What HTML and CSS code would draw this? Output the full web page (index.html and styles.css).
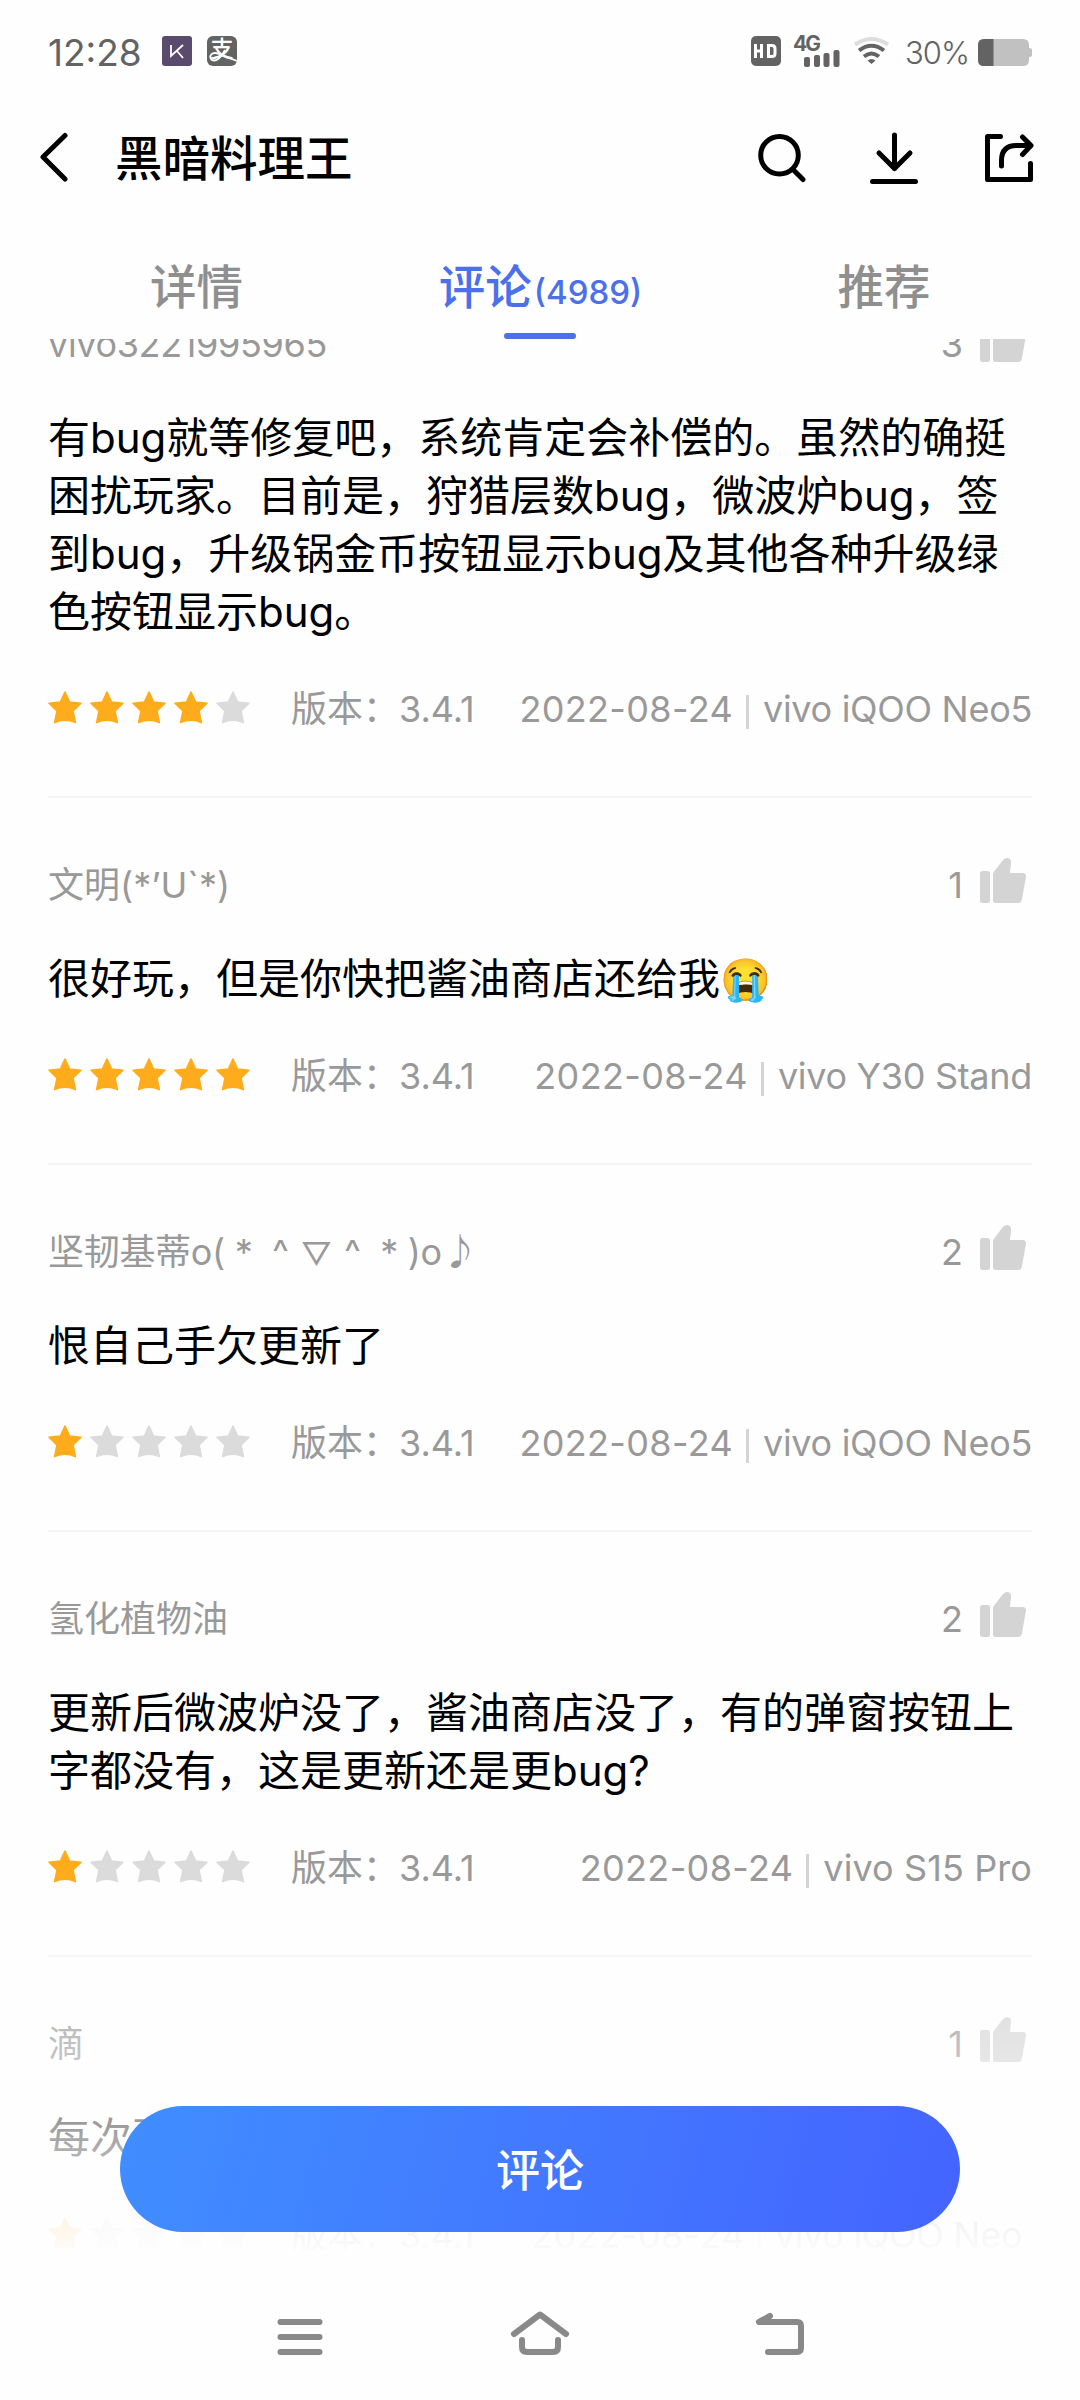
FILE: index.html
```html
<!DOCTYPE html>
<html lang="zh-CN">
<head>
<meta charset="utf-8">
<title>黑暗料理王</title>
<link rel="stylesheet" href="styles.css">
</head>
<body>
<svg class="defs" width="0" height="0" aria-hidden="true">
  <symbol id="star" viewBox="0 0 34 33"><path d="M17 1 L21.6 11 L33 12.2 L25 20 L27.4 31.6 Q17 26.6 6.6 31.6 L9 20 L1 12.2 L12.4 11 Z" fill="currentColor" stroke="currentColor" stroke-width="1.6" stroke-linejoin="round"/></symbol>
  <symbol id="thumb" viewBox="0 0 46 45"><rect x="0" y="13" width="10" height="32" rx="2.5" fill="currentColor"/><path d="M13 16.500 Q13 14.500 14.500 13 L23 2 Q25 0 27.500 0 Q31.500 .5 31 5 L30 15 H43 Q46.400 15.200 46 18.500 L41.800 42 Q41 45 38 45 H15.500 Q13 45 13 42.500 Z" fill="currentColor"/></symbol>
</svg>
<div class="screen">
  <header class="status">
    <span class="time">12:28</span>
    <svg class="app-k" width="30" height="30" viewBox="0 0 30 30"><rect width="30" height="30" rx="3" fill="#5a4a6e"/><path d="M9 9V20L21 9M15 15L21 22" fill="none" stroke="#fff" stroke-width="1.8"/></svg>
    <span class="pay">支<svg width="30" height="30" viewBox="0 0 30 30"><path d="M18 14C14 22 9 26 5 24C1 20 5 15 12 18L30 25" fill="none" stroke="#fff" stroke-width="1.800"/></svg></span>
    <span class="spacer"></span>
    <svg class="hd" width="30" height="30" viewBox="0 0 30 30"><rect width="30" height="30" rx="5" fill="#636363"/><path d="M4.500 8V22M10.500 8V22M4.500 15H10.500M17.500 9.500H21Q24 9.500 24 12.500V17.500Q24 20.500 21 20.500H17.500Z" fill="none" stroke="#fff" stroke-width="3"/></svg>
    <span class="signal"><b>4G</b><svg width="36" height="17" viewBox="0 0 36 17" fill="#636363"><rect y="7" width="6" height="10" rx="2"/><rect x="10" y="5" width="6" height="12" rx="2"/><rect x="19.500" y="3" width="6" height="14" rx="2"/><rect x="29.500" width="6" height="17" rx="2"/></svg></span>
    <svg class="wifi" width="35" height="28" viewBox="0 0 35 28" fill="none" stroke="#636363" stroke-width="4"><path d="M1 7.500Q17.500-3.500 34 7.500" stroke="#ddd"/><path d="M5 13.500Q17.500 4 30 13.500M10 19.500Q17.500 13.500 25 19.500"/><path d="M13.500 23.500Q17.500 20.500 21.500 23.500L17.500 27Z" fill="#636363" stroke="none"/></svg>
    <span class="percent">30%</span>
    <svg class="battery" width="54" height="27" viewBox="0 0 54 27"><path d="M6 0H45Q51 0 51 6V9Q54 9 54 11V16Q54 18 51 18V21Q51 27 45 27H6Q0 27 0 21V6Q0 0 6 0Z" fill="#c1c1c1"/><path d="M6 0H15.500V27H6Q0 27 0 21V6Q0 0 6 0Z" fill="#636363"/></svg>
  </header>
  <div class="titlebar">
    <svg class="back" width="28" height="50" viewBox="0 0 28 50"><path d="M25 3.500L3 25L25 47" fill="none" stroke="#000" stroke-width="5" stroke-linecap="round" stroke-linejoin="round"/></svg>
    <h1>黑暗料理王</h1>
    <span class="spacer"></span>
    <svg class="search" width="48" height="52" viewBox="0 0 48 52" fill="none" stroke="#000" stroke-width="5" stroke-linecap="round"><circle cx="21.500" cy="23.200" r="18.800"/><path d="M36 38.500L45 47.500"/></svg>
    <svg class="download" width="48" height="52" viewBox="0 0 48 52" fill="none" stroke="#000" stroke-width="5" stroke-linecap="round" stroke-linejoin="round"><path d="M24.500 3V36.500M9 21L24.500 36.500L40 21M2.500 49.500H45.500"/></svg>
    <svg class="share" width="50" height="52" viewBox="0 0 50 52" fill="none" stroke="#000" stroke-width="5" stroke-linecap="round" stroke-linejoin="round"><path d="M15.500 4.500H2.500V47.500H45.500V31.500M16.500 34V28.500Q16.500 13.500 31.500 13.500H46M37.500 5L46 13.500L37.500 22.500"/></svg>
  </div>
  <nav class="tabs">
    <span class="tab">详情</span>
    <span class="tab active">评论<small>(4989)</small></span>
    <span class="tab">推荐</span>
  </nav>
  <main class="list">
    <article class="review first">
      <div class="top"><span class="name digits">vivo3221995965</span><span class="count">3</span><svg class="thumb"><use href="#thumb"/></svg></div>
      <p class="body">有bug就等修复吧，系统肯定会补偿的。虽然的确挺<br>困扰玩家。目前是，狩猎层数bug，微波炉bug，签<br>到bug，升级锅金币按钮显示bug及其他各种升级绿<br>色按钮显示bug。</p>
      <div class="meta"><span class="stars"><svg class="on"><use href="#star"/></svg><svg class="on"><use href="#star"/></svg><svg class="on"><use href="#star"/></svg><svg class="on"><use href="#star"/></svg><svg><use href="#star"/></svg></span><span class="version">版本：3.4.1</span><span class="date">2022-08-24</span><i></i><span class="device">vivo iQOO Neo5</span></div>
    </article>
    <article class="review">
      <div class="top"><span class="name">文明(*’U`*)</span><span class="count">1</span><svg class="thumb"><use href="#thumb"/></svg></div>
      <p class="body">很好玩，但是你快把酱油商店还给我<span class="emoji">😭</span></p>
      <div class="meta"><span class="stars"><svg class="on"><use href="#star"/></svg><svg class="on"><use href="#star"/></svg><svg class="on"><use href="#star"/></svg><svg class="on"><use href="#star"/></svg><svg class="on"><use href="#star"/></svg></span><span class="version">版本：3.4.1</span><span class="date">2022-08-24</span><i></i><span class="device">vivo Y30 Stand</span></div>
    </article>
    <article class="review">
      <div class="top"><span class="name kaomoji">坚韧基蒂o( * <span class="wide">^</span><span class="wide tri">▽</span><span class="wide">^</span> * )o<span class="wide note">♪</span></span><span class="count">2</span><svg class="thumb"><use href="#thumb"/></svg></div>
      <p class="body">恨自己手欠更新了</p>
      <div class="meta"><span class="stars"><svg class="on"><use href="#star"/></svg><svg><use href="#star"/></svg><svg><use href="#star"/></svg><svg><use href="#star"/></svg><svg><use href="#star"/></svg></span><span class="version">版本：3.4.1</span><span class="date">2022-08-24</span><i></i><span class="device">vivo iQOO Neo5</span></div>
    </article>
    <article class="review">
      <div class="top"><span class="name">氢化植物油</span><span class="count">2</span><svg class="thumb"><use href="#thumb"/></svg></div>
      <p class="body">更新后微波炉没了，酱油商店没了，有的弹窗按钮上<br>字都没有，这是更新还是更bug?</p>
      <div class="meta"><span class="stars"><svg class="on"><use href="#star"/></svg><svg><use href="#star"/></svg><svg><use href="#star"/></svg><svg><use href="#star"/></svg><svg><use href="#star"/></svg></span><span class="version">版本：3.4.1</span><span class="date">2022-08-24</span><i></i><span class="device loose">vivo S15 Pro</span></div>
    </article>
    <article class="review">
      <div class="top"><span class="name">滴</span><span class="count">1</span><svg class="thumb"><use href="#thumb"/></svg></div>
      <p class="body">每次更</p>
      <div class="meta"><span class="stars"><svg class="on"><use href="#star"/></svg><svg><use href="#star"/></svg><svg><use href="#star"/></svg><svg><use href="#star"/></svg><svg><use href="#star"/></svg></span><span class="version">版本：3.4.1</span><span class="date">2022-08-24</span><i></i><span class="device">vivo iQOO Neo&nbsp;</span></div>
    </article>
    <div class="fade"><button class="comment">评论</button></div>
  </main>
  <footer class="sysnav">
    <svg width="60" height="50" viewBox="0 0 60 50"><path d="M10.500 11H49.500M10.500 26H49.500M10.500 41H49.500"/></svg>
    <svg width="60" height="50" viewBox="0 0 60 50"><path d="M4 23L30 3.500L56 23M12 29V36Q12 41 17 41H43Q48 41 48 36V29"/></svg>
    <svg width="60" height="50" viewBox="0 0 60 50"><path d="M20 5L9 11H47Q51 11 51 15V37Q51 41 47 41H18"/></svg>
  </footer>
</div>
</body>
</html>
```
FILE: styles.css
```css
* { box-sizing: border-box; }
body { margin: 0; background: #fefefe; font-family: Inter, "Noto Sans CJK SC", sans-serif; }
svg { display: block; flex: none; }
.defs { position: absolute; }
.screen { width: 1080px; height: 2400px; display: flex; flex-direction: column; overflow: hidden; background: #fefefe; }
.spacer { flex: 1; }

.status { height: 102px; display: flex; align-items: center; padding: 0 48px; color: #636363; flex: none; }
.time { width: 114px; font-size: 37px; line-height: 50px; padding-top: 3px; white-space: nowrap; }
.app-k { margin-right: 15px; }
.pay { position: relative; width: 30px; height: 30px; border-radius: 6px; background: #636363; color: #fff; font-size: 23px; font-weight: 500; line-height: 26px; text-align: center; }
.pay svg { position: absolute; left: 0; top: 0; }
.hd { margin-right: 12px; }
.signal { display: flex; flex-direction: column; align-items: flex-end; width: 47px; height: 30px; margin-right: 14px; }
.signal b { align-self: flex-start; font-size: 21px; line-height: 16px; height: 13px; letter-spacing: -2px; flex: none; }
.signal svg { margin-top: 1px; }
.wifi { margin-right: 16px; }
.percent { width: 73px; font-size: 31px; line-height: 40px; font-weight: 350; padding-top: 3px; letter-spacing: -1px; }
.battery { margin-top: 3px; }

.titlebar { height: 112px; flex: none; display: flex; align-items: center; padding: 0 45px 0 40px; }
.back { margin-right: 47px; margin-top: -3px; }
h1 { margin: 2px 0 0; font-size: 47.5px; line-height: 60px; font-weight: 500; color: #000; }
.search { margin-right: 64px; }
.download { margin-right: 67px; }

.tabs { height: 125px; flex: none; display: grid; grid-template-columns: 393px 295px 1fr; }
.tab { display: flex; flex-direction: column; align-items: center; color: #8f8f8f; font-size: 46.5px; line-height: 60px; font-weight: 500; padding-top: 43px; }
.tab.active { flex-direction: row; align-items: baseline; justify-content: center; color: #4c6fea; position: relative; }
.tab small { font-size: 33px; font-weight: 500; margin-left: 2px; }
.tab.active::after { content: ""; position: absolute; left: 111px; bottom: 0; width: 72px; height: 6px; border-radius: 3px; background: #4c6fea; }

.list { height: 1911px; flex: none; overflow: hidden; padding: 0 48px; position: relative; }
.review { padding: 61px 0 63px; border-bottom: 2px solid #f5f5f5; }
.first { margin-top: -82px; }
.top { display: flex; align-items: center; height: 50px; color: #999; font-size: 36px; line-height: 50px; }
.name { flex: 1; white-space: pre; padding-top: 1px; }
.digits { letter-spacing: -0.35px; }
.kaomoji { letter-spacing: -0.3px; }
.wide { display: inline-block; width: 36px; text-align: center; }
.tri { font-size: 31px; }
.note { font-family: "Noto Sans CJK SC", sans-serif; font-size: 36px; }
.count { margin-right: 17px; padding-top: 1px; }
.thumb { width: 46px; height: 45px; color: #d4d4d4; margin-right: 6px; margin-top: -7px; }
.body { margin: 41px 0 42px; font-size: 42px; line-height: 58px; color: #000; white-space: nowrap; }
.emoji { font-size: 41px; line-height: 1; }
.meta { display: flex; align-items: center; height: 50px; color: #999; font-size: 36px; line-height: 50px; white-space: nowrap; }
.version, .date, .device { padding-top: 2px; }
.stars { display: flex; gap: 8px; margin-right: 41px; margin-top: -2px; }
.stars svg { width: 34px; height: 33px; color: #dbdbdb; }
.stars .on { color: #ffac1c; }
.date { margin-left: auto; letter-spacing: 0.35px; }
.device { letter-spacing: -0.3px; }
.loose { letter-spacing: 0.1px; }
.meta i { width: 3px; height: 34px; background: #d4d4d4; margin: 8px 14px 0 13px; }

.fade { position: absolute; left: 0; right: 0; bottom: 0; height: 345px; background: linear-gradient(rgba(254,254,254,0), rgba(254,254,254,0.97)); display: flex; justify-content: center; align-items: flex-end; padding-bottom: 18px; }
.comment { width: 840px; height: 126px; border: 0; border-radius: 63px; background: linear-gradient(105deg, #408eff, #4464ff); color: #fff; font: 500 44px/60px Inter, "Noto Sans CJK SC", sans-serif; padding: 3px 0 0; }

.sysnav { flex: 1; display: grid; grid-template-columns: repeat(3, 240px); justify-content: center; justify-items: center; padding-top: 61px; }
.sysnav path { fill: none; stroke: #898989; stroke-width: 6; stroke-linecap: round; stroke-linejoin: round; }
```
